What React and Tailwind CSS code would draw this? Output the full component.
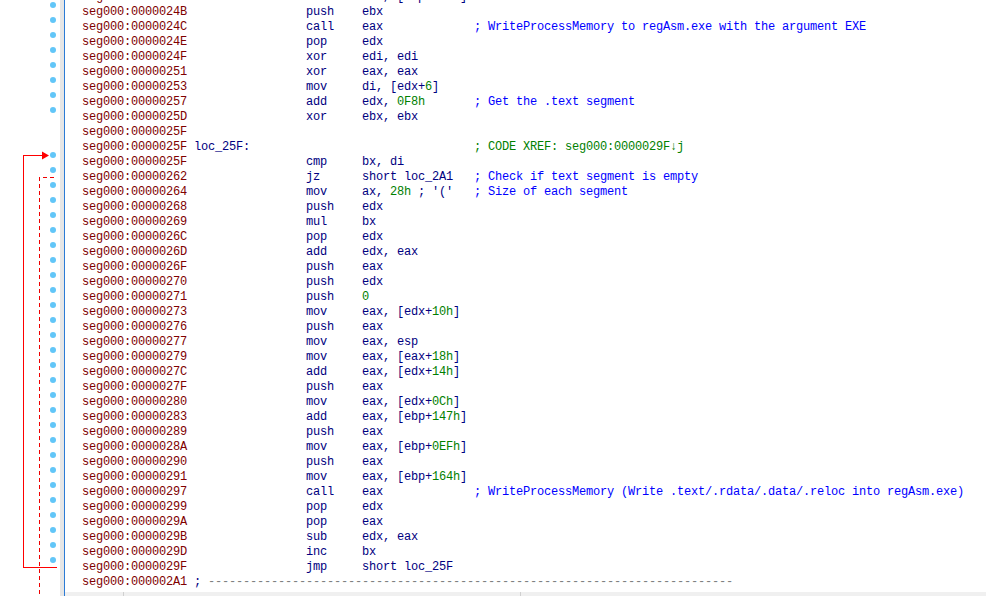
import React from 'react';

// one entry per listing line: address, label, mnemonic, operands, comment
const rows = [
  { a: '00000245', m: 'mov', o: 'eax, [ebp+160h]' },
  { a: '0000024B', m: 'push', o: 'ebx' },
  { a: '0000024C', m: 'call', o: 'eax', c: '; WriteProcessMemory to regAsm.exe with the argument EXE' },
  { a: '0000024E', m: 'pop', o: 'edx' },
  { a: '0000024F', m: 'xor', o: 'edi, edi' },
  { a: '00000251', m: 'xor', o: 'eax, eax' },
  { a: '00000253', m: 'mov', o: 'di, [edx+6]' },
  { a: '00000257', m: 'add', o: 'edx, 0F8h', c: '; Get the .text segment' },
  { a: '0000025D', m: 'xor', o: 'ebx, ebx' },
  { a: '0000025F' },
  { a: '0000025F', label: 'loc_25F:', c: '; CODE XREF: seg000:0000029F↓j', xref: true },
  { a: '0000025F', m: 'cmp', o: 'bx, di' },
  { a: '00000262', m: 'jz', o: 'short loc_2A1', c: '; Check if text segment is empty' },
  { a: '00000264', m: 'mov', o: "ax, 28h ; '('", c: '; Size of each segment' },
  { a: '00000268', m: 'push', o: 'edx' },
  { a: '00000269', m: 'mul', o: 'bx' },
  { a: '0000026C', m: 'pop', o: 'edx' },
  { a: '0000026D', m: 'add', o: 'edx, eax' },
  { a: '0000026F', m: 'push', o: 'eax' },
  { a: '00000270', m: 'push', o: 'edx' },
  { a: '00000271', m: 'push', o: '0' },
  { a: '00000273', m: 'mov', o: 'eax, [edx+10h]' },
  { a: '00000276', m: 'push', o: 'eax' },
  { a: '00000277', m: 'mov', o: 'eax, esp' },
  { a: '00000279', m: 'mov', o: 'eax, [eax+18h]' },
  { a: '0000027C', m: 'add', o: 'eax, [edx+14h]' },
  { a: '0000027F', m: 'push', o: 'eax' },
  { a: '00000280', m: 'mov', o: 'eax, [edx+0Ch]' },
  { a: '00000283', m: 'add', o: 'eax, [ebp+147h]' },
  { a: '00000289', m: 'push', o: 'eax' },
  { a: '0000028A', m: 'mov', o: 'eax, [ebp+0EFh]' },
  { a: '00000290', m: 'push', o: 'eax' },
  { a: '00000291', m: 'mov', o: 'eax, [ebp+164h]' },
  { a: '00000297', m: 'call', o: 'eax', c: '; WriteProcessMemory (Write .text/.rdata/.data/.reloc into regAsm.exe)' },
  { a: '00000299', m: 'pop', o: 'edx' },
  { a: '0000029A', m: 'pop', o: 'eax' },
  { a: '0000029B', m: 'sub', o: 'edx, eax' },
  { a: '0000029D', m: 'inc', o: 'bx' },
  { a: '0000029F', m: 'jmp', o: 'short loc_25F' },
  { a: '000002A1', sep: true },
];

// dot rows (index into visible lines, first full line = 0)
const dotRows = [0, 1, 2, 3, 4, 5, 6, 7, ...Array.from({ length: 28 }, (_, i) => i + 10)];

function Operands({ text }) {
  const parts = text.split(/(\b[0-9][0-9A-F]*h?\b)/);
  return parts.map((p, i) =>
    i % 2 ? (
      <span key={i} className="text-[#008000]">{p}</span>
    ) : (
      <span key={i}>{p}</span>
    )
  );
}

function Line({ r }) {
  return (
    <div className="flex h-[15px] items-center whitespace-pre leading-[15px]">
      <span className="w-[112px] shrink-0 text-[#800000]">seg000:{r.a}</span>
      {r.sep ? (
        <span className="text-[#000080]">
          ; <span className="text-[#808080]">{'-'.repeat(75)}</span>
        </span>
      ) : (
        <>
          <span className="w-[112px] shrink-0 text-[#000080]">{r.label || ''}</span>
          <span className="w-[56px] shrink-0 text-[#000080]">{r.m || ''}</span>
          <span className="w-[112px] shrink-0 text-[#000080]">{r.o ? <Operands text={r.o} /> : ''}</span>
          {r.c && (
            <span className={r.xref ? 'text-[#008000]' : 'text-[#0000ff]'}>{r.c}</span>
          )}
        </>
      )}
    </div>
  );
}

function FlowGutter() {
  return (
    <svg width="60" height="596" className="block">
      {dotRows.map((k) => (
        <circle key={k} cx="53" cy={5 + k * 15} r="3" fill="#62c6f8" />
      ))}
      {/* jmp short loc_25F */}
      <path
        d="M57 567.5 H23.5 V155.5 H44"
        fill="none"
        stroke="#ff0000"
        strokeWidth="1"
        shapeRendering="crispEdges"
      />
      <polygon points="42,151.5 49,155.5 42,159.5" fill="#ff0000" />
      {/* jz short loc_2A1 */}
      <path
        d="M54 177.5 H39.5 V600"
        fill="none"
        stroke="#ee0000"
        strokeWidth="1"
        strokeDasharray="4 3"
        shapeRendering="crispEdges"
      />
    </svg>
  );
}

export default function App() {
  return (
    <div className="flex h-[596px] w-[986px] overflow-hidden bg-white font-['Liberation_Mono',monospace] text-[12px] tracking-[-0.2px]">
      <div className="w-[60px] shrink-0">
        <FlowGutter />
      </div>
      <div className="w-[4px] shrink-0 bg-[#e6e6e6]" />
      <div className="flex min-w-0 flex-1 flex-col border-l border-[#2b7bd6]">
        <div className="min-h-0 flex-1 overflow-hidden pl-[17px]">
          <div className="-mt-[10px]">
            {rows.map((r, i) => (
              <Line key={i} r={r} />
            ))}
          </div>
        </div>
        <div className="flex h-[4px] shrink-0 bg-[#f0f0f0]">
          <div className="w-[59px] shrink-0 border-r border-[#d0d0d0]" />
          <div className="w-[397px] shrink-0 border-r border-[#d0d0d0]" />
        </div>
      </div>
    </div>
  );
}
